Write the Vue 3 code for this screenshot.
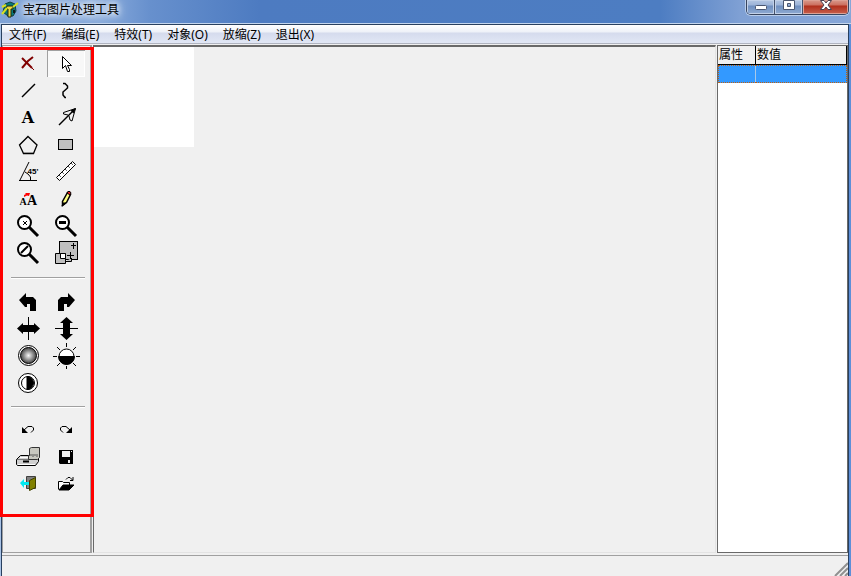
<template>
  <div class="window">
    <header class="title-bar">
      <svg class="app-icon" width="18" height="18" viewBox="0 0 18 18" aria-hidden="true">
        <path d="M4 3L9 1L14 3L15 10L12 15L7 15L2 11Z" fill="#087878" stroke="#123c3c" />
        <path d="M6 5H12V8H10V16H7V8H5Z" fill="#e8d840" stroke="#202810" />
        <path d="M1 13L6 7M12 6L17 2M1 6L5 4" stroke="#d8e020" stroke-width="2" />
        <path d="M12 9H14V12H12Z" fill="#101818" />
      </svg>
      <h1 class="title">宝石图片处理工具</h1>
      <div class="window-controls">
        <button class="control" type="button" aria-label="最小化">
          <svg width="14" height="14" viewBox="0 0 14 14"><rect x="1.500" y="5.500" width="11" height="4" rx="1" fill="#fff" stroke="#4a5670" /></svg>
        </button>
        <button class="control" type="button" aria-label="最大化">
          <svg width="14" height="14" viewBox="0 0 14 14"><path d="M1.500 .5H12.500V9.500H1.500ZM5.500 3.500V6.500H8.500V3.500Z" fill="#fff" fill-rule="evenodd" stroke="#4a5670" /></svg>
        </button>
        <button class="control close" type="button" aria-label="关闭">
          <svg width="14" height="14" viewBox="0 0 14 14"><path d="M1.500 .5H5L7 3L9 .5H12.500L9 5L12.500 9.500H9L7 7L5 9.500H1.500L5 5Z" fill="#fff" stroke="#4a4050" /></svg>
        </button>
      </div>
    </header>

    <div class="client">
      <nav class="menu-bar">
        <button v-for="item in menus" :key="item" class="menu-item" type="button">{{ item }}</button>
      </nav>

      <main class="workspace">
        <aside class="tool-panel">
          <template v-for="(group, index) in toolGroups" :key="index">
            <hr v-if="index > 0" class="separator">
            <div class="tool-group">
              <button
                v-for="tool in group"
                :key="tool.id"
                class="tool"
                :class="{ active: tool.id === activeTool }"
                type="button"
                :aria-label="tool.label"
                @click="activeTool = tool.id"
              >
                <svg width="38" height="27" viewBox="0 0 38 27" fill="none" stroke="#000">
                  <g v-if="tool.id === 'delete'" stroke="#800000">
                    <path d="M13 8L23 18" stroke-width="2" />
                    <path d="M24 7L19 11L13 18" stroke-width="2" />
                    <path d="M23 18L25 20" />
                  </g>
                  <path v-else-if="tool.id === 'select'" d="M15.500 6.500V18.500L18.500 15.500L20.500 21.500H22.500V19.500L20.500 15.500H24.500Z" fill="#fff" />
                  <path v-else-if="tool.id === 'line'" d="M13 20L26 7" stroke-width="1.500" />
                  <path v-else-if="tool.id === 'curve'" d="M16 6.500H18L20.500 9V11L16 15V18L18 20.500H19" stroke-width="1.500" />
                  <text v-else-if="tool.id === 'text'" class="glyph slab" x="19" y="19">A</text>
                  <g v-else-if="tool.id === 'arrow'">
                    <path d="M12 21L28 5" stroke-width="1.500" />
                    <path d="M28.500 4.500L16.500 8.500V10L21 11M28.500 4.500L25 17L23 16L22 12" />
                    <path d="M29 4L23.500 6.500L26.500 9.500Z" fill="#000" stroke="none" />
                  </g>
                  <g v-else-if="tool.id === 'polygon'">
                    <path d="M19 5.500L28 14L24.500 22.500H14.500L10.500 14Z" stroke-width="1.300" />
                    <path d="M15 21.500H24" stroke="#999" />
                  </g>
                  <rect v-else-if="tool.id === 'rectangle'" x="11.500" y="8.500" width="14" height="10" fill="#c0c0c0" />
                  <g v-else-if="tool.id === 'angle'">
                    <path d="M10 22.500H28M11 22L20 4M16 14L19 16L21.500 19V22" />
                    <text class="glyph degree" x="24" y="16">45'</text>
                  </g>
                  <g v-else-if="tool.id === 'ruler'">
                    <path d="M9.500 19.500L25.500 3.500L28.500 6.500L12.500 22.500Z" fill="#fff" />
                    <path d="M12 17L14 19M15 14L17 16M18 11L20 13M21 8L23 10M24 5L26 7" stroke-dasharray="1 1" />
                  </g>
                  <g v-else-if="tool.id === 'font'">
                    <text class="glyph serif" x="14" y="20">A</text>
                    <text class="glyph serif large" x="23" y="20">A</text>
                    <path d="M15 12V10L17 9L16 8H21L20 11L18 10.500Z" fill="#f00" stroke="none" />
                  </g>
                  <g v-else-if="tool.id === 'pencil'">
                    <path d="M15.500 20.500V16.500L20.500 7.500L23.500 9.500L19.500 17.500Z" fill="#ffff80" stroke-width="1.500" />
                    <path d="M20 8L21 6.500H23L24 8L23 10Z" fill="#e02020" />
                    <path d="M15 21L19 18H16Z" fill="#000" />
                  </g>
                  <g v-else-if="magnifiers.includes(tool.id)">
                    <path d="M20 15L29 24" stroke-width="3" />
                    <circle cx="15.500" cy="10.500" r="6.500" fill="#fff" stroke-width="2" />
                    <path v-if="tool.id === 'zoom-in'" d="M14 9L18 13M18 9L14 13" />
                    <path v-else-if="tool.id === 'zoom-out'" d="M12 10.500H19" stroke-width="3" />
                    <path v-else d="M12 14L19 7" stroke-width="2" />
                  </g>
                  <g v-else-if="tool.id === 'resize'">
                    <rect x="12.500" y="2.500" width="18" height="18" fill="#c0c0c0" />
                    <path d="M8.500 14.500H18.500V24.500H8.500ZM18.500 22.500H24.500V19" fill="#c0c0c0" />
                    <path d="M13.500 14.500H18.500V19.500H13.500Z" fill="#fff" />
                    <path d="M24 6.500H29M26.500 4V10M20 16.500H27M23.500 13V20" />
                  </g>
                  <path v-else-if="tool.id === 'rotate-left'" d="M10 12L17 5V9H24L27 12V23H21V16H18V19H16Z" fill="#000" stroke="none" />
                  <path v-else-if="tool.id === 'rotate-right'" d="M28 12L21 5V9H14L11 12V23H17V16H20V19H22Z" fill="#000" stroke="none" />
                  <g v-else-if="tool.id === 'flip-h'">
                    <path d="M19.500 2V25" />
                    <path d="M8 13.500L14 8V10H25V8L31 13.500L25 19V17H14V19Z" fill="#000" stroke="none" />
                  </g>
                  <g v-else-if="tool.id === 'flip-v'">
                    <path d="M8 13.500H31" />
                    <path d="M19.500 2L26 8H23V19H26L19.500 25L13 19H16V8H13Z" fill="#000" stroke="none" />
                  </g>
                  <g v-else-if="tool.id === 'blur'">
                    <defs>
                      <radialGradient id="sphere">
                        <stop offset="0" stop-color="#f8f8f8" />
                        <stop offset="1" stop-color="#404040" />
                      </radialGradient>
                    </defs>
                    <circle cx="19.500" cy="13.500" r="10" fill="#fff" />
                    <circle cx="19.500" cy="13.500" r="8" fill="url(#sphere)" />
                  </g>
                  <g v-else-if="tool.id === 'brightness'">
                    <circle cx="19.500" cy="14.500" r="7.500" fill="#fff" />
                    <path d="M11.500 14.500H27.500A8 8 0 0 1 11.500 14.500Z" fill="#000" />
                    <path d="M19.500 1V5M19.500 24V27M6 14.500H10M29 14.500H33M10 5L13 8M29 5L26 8M10 24L13 21M29 24L26 21" />
                  </g>
                  <g v-else-if="tool.id === 'contrast'">
                    <circle cx="19" cy="14" r="9.500" fill="#fff" />
                    <circle cx="19" cy="14" r="6.500" />
                    <path d="M18 7.500A6.500 6.500 0 0 1 18 20.500Z" fill="#000" />
                  </g>
                  <g v-else-if="tool.id === 'undo'">
                    <path d="M15 14L19 10.500H23L24.500 12V14L22 16.500" />
                    <path d="M13 11V17H19Z" fill="#000" stroke="none" />
                  </g>
                  <g v-else-if="tool.id === 'redo'">
                    <path d="M23 14L19 10.500H15L13.500 12V14L16 16.500" />
                    <path d="M25 11V17H19Z" fill="#000" stroke="none" />
                  </g>
                  <g v-else-if="tool.id === 'scan'">
                    <path d="M7.500 16.500L11.500 12.500H29.500V18.500L26.500 22.500H8.500L7.500 21.500Z" fill="#d0d0d0" />
                    <path d="M8 16.500H25L28 13" stroke="#777" />
                    <path d="M11 14.500H21M9 21.500H26" stroke="#fff" />
                    <path d="M14 18.500H20" stroke-width="2" />
                    <path d="M20.500 5.500L22.500 4.500H30.500V14.500L28.500 16.500H19.500V12.500H20.500Z" fill="#c8c8c0" stroke="#333" />
                    <path d="M22 13V11M24 14V11M26 13V11M28 14V11" stroke="#555" />
                  </g>
                  <g v-else-if="tool.id === 'save'">
                    <path d="M12 7H26V21H13L12 20Z" fill="#000" stroke="none" />
                    <path d="M15 8H23V14H15ZM21 17H23V20H21ZM24 8H25V9H24Z" fill="#eee" stroke="none" />
                  </g>
                  <g v-else-if="tool.id === 'exit'">
                    <path d="M17.500 6.500H26.500V18.500H17.500Z" fill="#808080" stroke="#404040" />
                    <path d="M20.500 10.500L26.500 7.500V17.500L20.500 20.500Z" fill="#808000" stroke="#404000" />
                    <path d="M11 13L15 9V12H20V15H15V18Z" fill="#00e8f0" stroke="none" />
                  </g>
                  <g v-else>
                    <path d="M11.500 19.500V11.500H15.500L16.500 12.500H22.500V15" fill="#fff" />
                    <path d="M12 20L16 15H27L22 20Z" fill="#000" />
                    <path d="M19 9.500L21 7.500H23L25.500 10M26 7V10.500H23" />
                  </g>
                </svg>
              </button>
            </div>
          </template>
          <div class="highlight"></div>
        </aside>

        <section class="canvas-area">
          <div class="canvas"></div>
        </section>

        <section class="properties">
          <table class="property-table">
            <thead>
              <tr><th scope="col" class="name-col">属性</th><th scope="col">数值</th></tr>
            </thead>
            <tbody>
              <tr><td></td><td></td></tr>
            </tbody>
          </table>
        </section>
      </main>

      <footer class="status-bar">
        <svg width="14" height="14" viewBox="0 0 14 14" aria-hidden="true">
          <path d="M1 14L14 1M6 14L14 6M11 14L14 11" stroke="#909090" stroke-width="2" />
        </svg>
      </footer>
    </div>
  </div>
</template>

<script setup>
import { ref } from 'vue';

const menus = ['文件(F)', '编缉(E)', '特效(T)', '对象(O)', '放缩(Z)', '退出(X)'];

const activeTool = ref('select');
const magnifiers = ['zoom-in', 'zoom-out', 'zoom-reset'];

const toolGroups = [
  [
    { id: 'delete', label: '删除' },
    { id: 'select', label: '选择' },
    { id: 'line', label: '直线' },
    { id: 'curve', label: '曲线' },
    { id: 'text', label: '文字' },
    { id: 'arrow', label: '箭头' },
    { id: 'polygon', label: '多边形' },
    { id: 'rectangle', label: '矩形' },
    { id: 'angle', label: '角度' },
    { id: 'ruler', label: '标尺' },
    { id: 'font', label: '字体' },
    { id: 'pencil', label: '铅笔' },
    { id: 'zoom-in', label: '放大' },
    { id: 'zoom-out', label: '缩小' },
    { id: 'zoom-reset', label: '还原' },
    { id: 'resize', label: '调整大小' },
  ],
  [
    { id: 'rotate-left', label: '向左旋转' },
    { id: 'rotate-right', label: '向右旋转' },
    { id: 'flip-h', label: '水平翻转' },
    { id: 'flip-v', label: '垂直翻转' },
    { id: 'blur', label: '模糊' },
    { id: 'brightness', label: '亮度' },
    { id: 'contrast', label: '对比度' },
  ],
  [
    { id: 'undo', label: '撤销' },
    { id: 'redo', label: '重做' },
    { id: 'scan', label: '扫描' },
    { id: 'save', label: '保存' },
    { id: 'exit', label: '退出' },
    { id: 'open', label: '打开' },
  ],
];
</script>

<style>
body {
  margin: 0;
}
</style>

<style scoped>
.window {
  box-sizing: border-box;
  display: flex;
  flex-direction: column;
  height: 100vh;
  overflow: hidden;
  background: linear-gradient(90deg, #a9c3e6, #5480c4 50%, #5d8fd8);
  font-family: "Noto Sans", "Noto Sans CJK SC", sans-serif;
  font-size: 12px;
  color: #000;
}

button {
  padding: 0;
  border: 0;
  background: none;
  font: inherit;
  color: inherit;
}

svg {
  display: block;
}

.title-bar {
  display: flex;
  align-items: flex-start;
  height: 23px;
  padding: 0 2px 0 1px;
  background: linear-gradient(90deg, #7fa3d6 0, #88aadb 100px, #6790cd 150px, #4d7bc1 260px, #4d7dc2 660px, #7fa0d4 740px, #86a6d8);
  border-bottom: 1px solid #c4d6ee;
}

.app-icon {
  margin-top: 1px;
}

.title {
  margin: 0 auto 0 0;
  padding: 0 4px;
  font-size: 12px;
  font-weight: normal;
  line-height: 20px;
  text-shadow: 0 0 6px #fff, 0 0 8px #fff, 0 0 12px #dce8f8;
}

.window-controls {
  display: flex;
  border: 1px solid #38455f;
  border-top: 0;
  border-radius: 0 0 5px 5px;
  overflow: hidden;
  box-shadow: 0 0 0 1px #b9cdea;
}

.control {
  display: flex;
  justify-content: center;
  width: 28px;
  height: 14px;
  border-right: 1px solid #46536e;
  background: linear-gradient(#b4c6e2 0, #9db4d8 5px, #6f8fbf 6px, #8faad2);
  box-shadow: inset 0 0 0 1px #c2d1e8;
}

.control.close {
  width: 45px;
  border-right: 0;
  background: linear-gradient(#d99a8c 0, #cc7060 5px, #b02f1c 6px, #c8604c);
  box-shadow: inset 0 0 0 1px #dda194;
}

.client {
  display: flex;
  flex-direction: column;
  flex: 1;
  min-height: 0;
  margin: 0 2px 0 1px;
  border: 1px solid #29405f;
  border-bottom: 0;
  background: #f0f0f0;
}

.menu-bar {
  display: flex;
  gap: 15px;
  height: 18px;
  padding: 0 7px;
  background: linear-gradient(#fff 0, #eef1f8 7px, #d5dbed 8px, #e1e7f5);
  border-bottom: 1px solid #b0b4c0;
}

.menu-item {
  line-height: 20px;
  white-space: nowrap;
}

.workspace {
  display: flex;
  flex: 1;
  min-height: 0;
  padding-top: 1px;
}

.tool-panel {
  position: relative;
  box-sizing: border-box;
  width: 90px;
  padding: 4px 5px 0 6px;
  border: 1px solid #a0a0a0;
  border-width: 1px 2px 1px 1px;
  margin-right: 1px;
}

.tool-group {
  display: grid;
  grid-template-columns: 38px 38px;
  grid-auto-rows: 27px;
}

.separator {
  height: 1px;
  margin: 11px 0 9px 2px;
  border: 0;
  border-top: 1px solid #a0a0a0;
  background: #fff;
}

.separator:last-of-type {
  margin: 10px 0 8px 2px;
}

.tool.active {
  background: #f8f8f8;
  box-shadow: inset 1px 1px #a0a0a0, inset -1px -1px #fff;
}

.glyph {
  fill: #000;
  stroke: none;
  text-anchor: middle;
  font-weight: bold;
}

.glyph.slab {
  font-family: "DejaVu Serif", serif;
  font-size: 16px;
}

.glyph.degree {
  font-family: "Liberation Sans", sans-serif;
  font-size: 8px;
}

.glyph.serif {
  font-family: "Liberation Serif", serif;
  font-size: 10px;
}

.glyph.serif.large {
  font-size: 14px;
}

.highlight {
  position: absolute;
  top: 1px;
  left: -3px;
  width: 88px;
  height: 464px;
  border: 3px solid #f00;
  pointer-events: none;
}

.canvas-area {
  flex: 1;
  min-width: 0;
  border: 1px solid #696969;
  border-top-width: 2px;
  border-right-color: #e3e3e3;
  border-bottom-color: #e3e3e3;
  margin-right: 1px;
}

.canvas {
  width: 100px;
  height: 100px;
  background: #fff;
}

.properties {
  box-sizing: border-box;
  width: 131px;
  border: 1px solid #696969;
  background: #fff;
}

.property-table {
  width: 100%;
  border-collapse: separate;
  border-spacing: 0;
  table-layout: fixed;
}

.property-table th {
  height: 18px;
  padding: 0 1px;
  background: #f0f0f0;
  border-right: 1px solid #000;
  border-bottom: 1px solid #000;
  font-weight: normal;
  line-height: 18px;
  text-align: left;
}

.property-table .name-col {
  width: 35px;
}

.property-table td {
  height: 16px;
  padding: 0;
  background: #3399ff;
  border: 1px dotted #c06010;
  border-width: 1px 0;
}

.property-table td:first-child {
  border-left-width: 1px;
  box-shadow: inset -1px 0 #a8c8e8;
}

.property-table td:last-child {
  border-right-width: 1px;
}

.status-bar {
  display: flex;
  align-items: flex-end;
  justify-content: flex-end;
  height: 20px;
  margin-top: 2px;
  border-top: 1px solid #a0a0a0;
}
</style>
